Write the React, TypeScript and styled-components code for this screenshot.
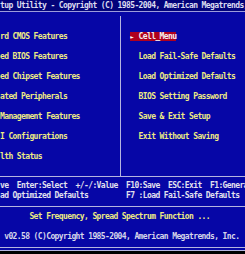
import styled, { createGlobalStyle } from 'styled-components';

// one text cell of the scaled 80x25 screen
const CELL = 4.2;

const GlobalStyle = createGlobalStyle`
  html, body {
    margin: 0;
    padding: 0;
    background: #000;
    overflow: hidden;
  }
`;

const Screen = styled.div`
  width: 245px;
  height: 251px;
  background: #0606a6;
  overflow: hidden;
  display: flex;
  flex-direction: column;
  font-family: 'DejaVu Sans Mono', 'Liberation Mono', monospace;
  font-size: 8px;
  font-weight: bold;
  letter-spacing: -0.616px;
  white-space: pre;
`;

const TitleBar = styled.div`
  height: 11px;
  line-height: 11px;
  background: #03037a;
  color: #dcdcf0;
  border-bottom: 1px solid #9c9cdc;
`;

const Main = styled.div`
  height: 160px;
  padding-top: 4px;
  display: grid;
  grid-template-columns: 120px 1fr;
  border-bottom: 1px solid #b4b4e0;
`;

const Column = styled.div<{ $divider?: boolean }>`
  padding-top: 10px;
  padding-left: ${(p) => (p.$divider ? CELL * 2 + 0.8 : 0)}px;
  border-left: ${(p) => (p.$divider ? '1px solid #b4b4e0' : 'none')};
`;

const MenuRow = styled.div`
  height: 20px;
  display: flex;
  align-items: center;
`;

const MenuLabel = styled.span<{ $selected?: boolean }>`
  display: inline-block;
  height: 9px;
  line-height: 9px;
  background: ${(p) => (p.$selected ? '#b0001e' : 'transparent')};
  color: ${(p) => (p.$selected ? '#f4eef0' : '#ecea84')};
`;

const Arrow = styled.span`
  display: inline-block;
  width: ${CELL * 2}px;
  font-size: 6px;
  letter-spacing: 0;
  color: #fff;
`;

const KeyBar = styled.div`
  height: 25px;
  padding-top: 4px;
  border-bottom: 1px solid #b4b4e0;
  color: #e2e2ee;
`;

const KeyRow = styled.div`
  display: grid;
  grid-template-columns: ${CELL * 30}px 1fr;
  height: 10px;
  line-height: 10px;
`;

const HelpLine = styled.div`
  height: 20px;
  line-height: 20px;
  padding-left: ${CELL * 7}px;
  color: #ecea84;
`;

const Footer = styled.div`
  height: 20px;
  line-height: 20px;
  padding-left: ${CELL}px;
  color: #d6d6ea;
  border-bottom: 1px solid #b4b4e0;
`;

const BaseEdge = styled.div`
  height: 2px;
  border-bottom: 1px solid #b4b4e0;
`;

const leftMenu = [
  'rd CMOS Features',
  'ed BIOS Features',
  'ed Chipset Features',
  'ated Peripherals',
  'Management Features',
  'I Configurations',
  'lth Status',
];

const rightMenu = [
  'Cell_Menu',
  'Load Fail-Safe Defaults',
  'Load Optimized Defaults',
  'BIOS Setting Password',
  'Save & Exit Setup',
  'Exit Without Saving',
];

export default function App() {
  const selected = 0;

  return (
    <>
      <GlobalStyle />
      <Screen>
        <TitleBar>tup Utility - Copyright (C) 1985-2004, American Megatrends, Inc.</TitleBar>
        <Main>
          <Column>
            {leftMenu.map((item) => (
              <MenuRow key={item}>
                <MenuLabel>{item}</MenuLabel>
              </MenuRow>
            ))}
          </Column>
          <Column $divider>
            {rightMenu.map((item, i) => (
              <MenuRow key={item}>
                <MenuLabel $selected={i === selected}>
                  <Arrow>{i === selected ? '►' : ' '}</Arrow>
                  {item}
                </MenuLabel>
              </MenuRow>
            ))}
          </Column>
        </Main>
        <KeyBar>
          <KeyRow>
            <span>ve  Enter:Select  +/-/:Value</span>
            <span>F10:Save  ESC:Exit  F1:General Help</span>
          </KeyRow>
          <KeyRow>
            <span>ad Optimized Defaults</span>
            <span>F7 :Load Fail-Safe Defaults</span>
          </KeyRow>
        </KeyBar>
        <HelpLine>Set Frequency, Spread Spectrum Function ...</HelpLine>
        <Footer>v02.58 (C)Copyright 1985-2004, American Megatrends, Inc.</Footer>
        <BaseEdge />
      </Screen>
    </>
  );
}
